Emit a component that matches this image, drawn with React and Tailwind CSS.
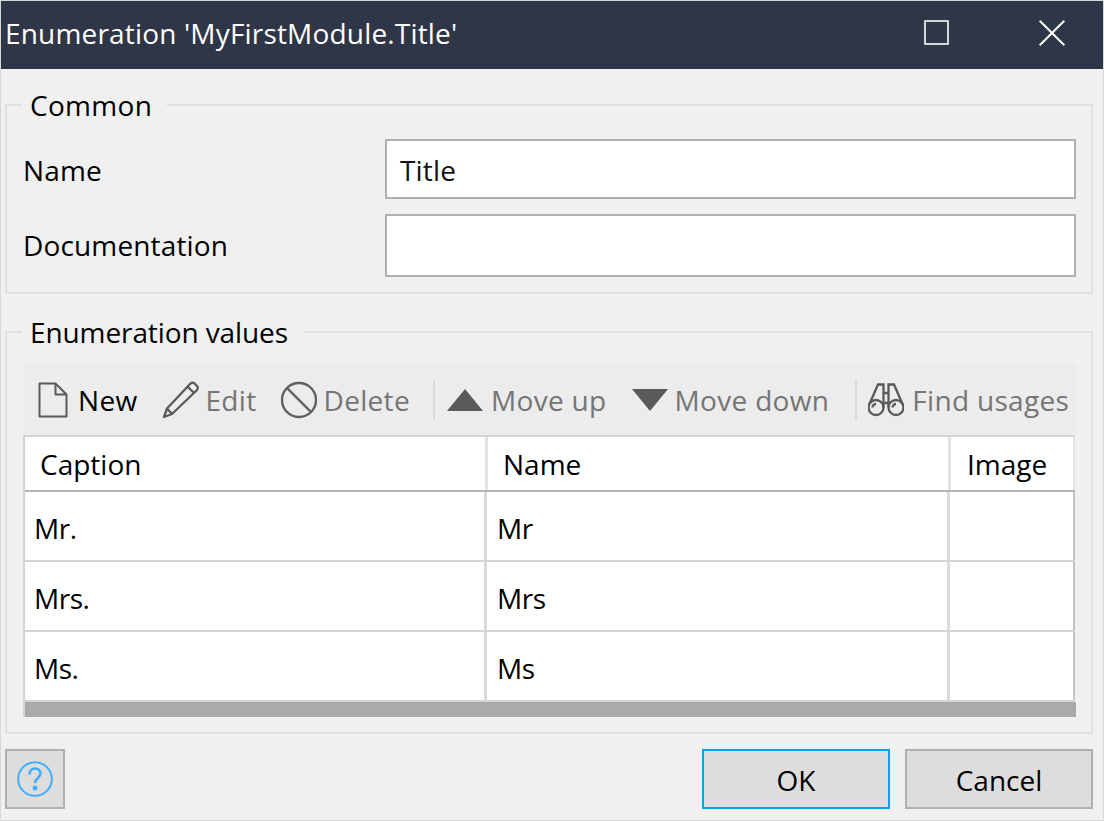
import React from "react";

const font = { fontFamily: '"Open Sans", "Noto Sans", sans-serif' };

function Sep() {
  return <div className="w-[2px] h-[40px] bg-[#d9d9d9] shrink-0" />;
}

function Tool({ icon, label, active, className }) {
  return (
    <div className={"flex items-center shrink-0 " + (className || "")}>
      {icon}
      <span className={"text-[28px] leading-[36px] tracking-[0.32px] " + (active ? "text-black" : "text-[#757575]")}>{label}</span>
    </div>
  );
}

function Row({ a, b }) {
  return (
    <div className="flex h-[70px] border-b-2 border-[#d4d4d4]">
      <div className="w-[462px] pl-[9px] pt-[4px] flex items-center border-r-[3px] border-[#d9d9d9] text-[28px] tracking-[-0.5px] text-black">{a}</div>
      <div className="w-[463px] pl-[10px] pt-[4px] flex items-center border-r-[3px] border-[#d9d9d9] text-[28px] tracking-[-0.5px] text-black">{b}</div>
      <div className="flex-1 border-r-2 border-[#c4c4c4]" />
    </div>
  );
}

export default function App() {
  return (
    <div style={font} className="w-[1104px] h-[821px] bg-[#f0f0f0] border border-[#d8d8d8] flex flex-col overflow-hidden">
      <header className="h-[68px] bg-[#2f3647] flex items-center pl-[4px] shrink-0">
        <span className="text-[28px] tracking-[0.18px] text-white leading-[36px] pb-[4px] flex-1">Enumeration 'MyFirstModule.Title'</span>
        <svg width="25" height="25" viewBox="0 0 25 25" className="mr-[90px] mb-[5px]">
          <rect x="1" y="1" width="23" height="23" fill="none" stroke="#fff" strokeWidth="1.6" />
        </svg>
        <svg width="26" height="26" viewBox="0 0 26 26" className="mr-[38px] mb-[4px]">
          <path d="M0.7 0.7 L25.3 25.3 M25.3 0.7 L0.7 25.3" stroke="#fff" strokeWidth="2" fill="none" />
        </svg>
      </header>

      <fieldset className="mt-[18px] ml-[4px] w-[1088px] h-[207px] border-2 border-[#e0e0e0] pl-[16px] pr-[15px] shrink-0">
        <legend className="-ml-[1px] pl-[8px] pr-[15px] text-[28px] tracking-[0.3px] leading-[36px] text-black">Common</legend>
        <div className="flex items-center mt-[16px] h-[60px]">
          <label className="w-[362px] pt-[2px] text-[28px] tracking-[0.15px] text-black">Name</label>
          <div className="flex-1 h-[60px] bg-white border-2 border-[#b0b0b0] pl-[13px] pt-[2px] flex items-center text-[28px] tracking-[0.15px] text-[#111]">Title</div>
        </div>
        <div className="flex items-center mt-[15px] h-[63px]">
          <label className="w-[362px] pb-[2px] text-[28px] tracking-[0.15px] text-black">Documentation</label>
          <div className="flex-1 h-[63px] bg-white border-2 border-[#b0b0b0]" />
        </div>
      </fieldset>

      <fieldset className="mt-[21px] ml-[4px] w-[1088px] h-[419px] border-2 border-[#e0e0e0] pl-[16px] pr-[15px] shrink-0">
        <legend className="-ml-[1px] pl-[8px] pr-[16px] text-[28px] tracking-[-0.1px] leading-[34px] text-black">Enumeration values</legend>
        <div className="mt-[15px] h-[71px] bg-[#ececec] flex items-center pl-[15px]">
          <Tool
            active
            label="New"
            icon={
              <svg width="30" height="36" viewBox="0 0 30 36" className="mr-[10px]">
                <path d="M1.5 1.5 H17.5 L28.5 12.5 V34.5 H1.5 Z M17.5 1.5 V12.5 H28.5" fill="none" stroke="#5a5a5a" strokeWidth="2" strokeLinejoin="round" />
              </svg>
            }
          />
          <Tool
            className="ml-[25px]"
            label="Edit"
            icon={
              <svg width="37" height="38" viewBox="0 0 37 38" className="mr-[6px]">
                <path d="M28.5 2.5 Q30.5 0.8 32.5 2.5 L35 5 Q36.5 7 35 9 L10 33 L2 36 L5 27.5 Z M25.5 5.5 L32 12 M5 27.5 L10 33" fill="none" stroke="#5a5a5a" strokeWidth="2.3" strokeLinejoin="round" />
              </svg>
            }
          />
          <Tool
            className="ml-[24px]"
            label="Delete"
            icon={
              <svg width="36" height="38" viewBox="0 0 36 38" className="mr-[7px]">
                <circle cx="18" cy="19" r="17" fill="none" stroke="#5f5f5f" strokeWidth="2.4" />
                <path d="M6 7 L30 31" stroke="#5f5f5f" strokeWidth="2.4" />
              </svg>
            }
          />
          <div className="ml-[23px] mr-[12px]"><Sep /></div>
          <Tool
            label="Move up"
            icon={
              <svg width="36" height="22" viewBox="0 0 36 22" className="mr-[8px]">
                <path d="M18 0 L36 22 H0 Z" fill="#5a5a5a" />
              </svg>
            }
          />
          <Tool
            className="ml-[25px]"
            label="Move down"
            icon={
              <svg width="36" height="22" viewBox="0 0 36 22" className="mr-[7px]">
                <path d="M0 0 H36 L18 22 Z" fill="#5a5a5a" />
              </svg>
            }
          />
          <div className="ml-[26px] mr-[11px]"><Sep /></div>
          <Tool
            label="Find usages"
            icon={
              <svg width="36" height="34" viewBox="0 0 36 34" className="mr-[8px]">
                <g fill="none" stroke="#5a5a5a" strokeWidth="2.3">
                  <circle cx="8" cy="24.5" r="7.5" />
                  <circle cx="28" cy="24.5" r="7.5" />
                  <path d="M1.5 21 L10 1.5 H15.5 V24.5 M34.5 21 L26 1.5 H20.5 V24.5 M15.5 10 H20.5 M15.5 20 H20.5" />
                  <path d="M4.5 24.5 A3.5 3.5 0 0 1 8 21 M24.5 24.5 A3.5 3.5 0 0 1 28 21" />
                </g>
              </svg>
            }
          />
        </div>
        <div className="border-l-2 border-[#d4d4d4]">
          <div className="border-t-2 border-[#d4d4d4] bg-white mr-[1px]">
            <div className="flex h-[55px] border-b-2 border-[#b4b4b4] text-[28px] text-black">
              <div className="w-[463px] pl-[15px] flex items-center border-r-[3px] border-[#e2e2e2]">Caption</div>
              <div className="w-[463px] pl-[15px] flex items-center border-r-[3px] border-[#e2e2e2]">Name</div>
              <div className="flex-1 pl-[16px] flex items-center border-r-2 border-[#e2e2e2]">Image</div>
            </div>
            <Row a="Mr." b="Mr" />
            <Row a="Mrs." b="Mrs" />
            <Row a="Ms." b="Ms" />
          </div>
          <div className="h-[15px] bg-[#aaaaaa]" />
        </div>
      </fieldset>

      <footer className="mt-[15px] ml-[4px] w-[1088px] flex shrink-0">
        <button className="w-[60px] h-[60px] bg-[#dddddd] border-2 border-[#b0b0b0] flex items-center justify-center">
          <svg width="36" height="36" viewBox="0 0 36 36">
            <circle cx="18" cy="18" r="16.8" fill="none" stroke="#41aefb" strokeWidth="2" />
            <path d="M12.5 13.5 C12.5 5.5 23.5 6 23.5 12.5 C23.5 16.5 18 17.5 18 22" fill="none" stroke="#41aefb" strokeWidth="2.6" />
            <circle cx="18" cy="27" r="2.5" fill="#41aefb" />
          </svg>
        </button>
        <button className="ml-auto w-[188px] h-[60px] bg-[#dddddd] border-2 border-[#00a2ed] pt-[2px] text-[28px] text-black">OK</button>
        <button className="ml-[15px] w-[188px] h-[60px] bg-[#dddddd] border-2 border-[#b0b0b0] pt-[2px] text-[28px] text-black">Cancel</button>
      </footer>
    </div>
  );
}
